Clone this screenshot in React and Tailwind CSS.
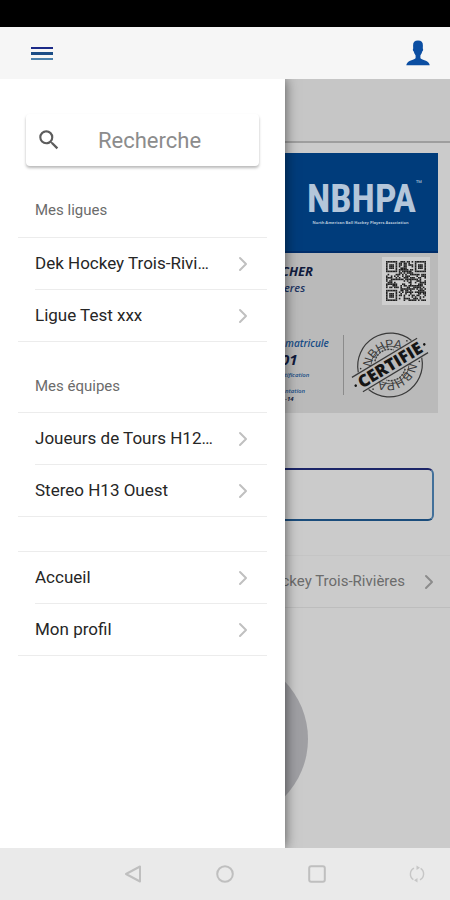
import { ChevronRight } from 'lucide-react';
import { MdSearch } from 'react-icons/md';

const leagues = ['Dek Hockey Trois-Rivi…', 'Ligue Test xxx'];
const teams = ['Joueurs de Tours H12…', 'Stereo H13 Ouest'];
const pages = ['Accueil', 'Mon profil'];

const QR_SIZE = 25;

// Corner squares first, then a fixed scatter for the data area
function isDark(x, y) {
    const corners = [[0, 0], [QR_SIZE - 7, 0], [0, QR_SIZE - 7]];
    for (const [cx, cy] of corners) {
        const dx = x - cx;
        const dy = y - cy;
        if (dx >= -1 && dx <= 7 && dy >= -1 && dy <= 7) {
            const ring = Math.max(Math.abs(dx - 3), Math.abs(dy - 3));
            return ring === 3 || ring <= 1;
        }
    }
    const n = Math.sin(x * 12.9898 + y * 78.233) * 43758.5453;
    return n - Math.floor(n) > 0.47;
}

function QrCode() {
    const cells = [];
    for (let y = 0; y < QR_SIZE; y++) {
        for (let x = 0; x < QR_SIZE; x++) {
            if (isDark(x, y)) {
                cells.push(<rect key={`${x}-${y}`} x={x} y={y} width="1" height="1" />);
            }
        }
    }

    return (
        <div className="bg-[#cecece] p-1">
            <svg viewBox="0 0 25 25" className="size-10" fill="#202020">
                {cells}
            </svg>
        </div>
    );
}

function Stamp() {
    return (
        <svg viewBox="-38 -38 76 76" className="size-[76px] overflow-visible" fill="none" stroke="#3a3a3a">
            <defs>
                <path id="stamp-arc" d="M-21 -1A22 22 0 0 1 21 -1" />
            </defs>
            <g transform="rotate(-31)">
                {[0, 180].map((angle) => (
                    <g key={angle} transform={`rotate(${angle})`}>
                        <path d="M-31 -10A33 33 0 0 1 31 -10" strokeWidth="1.2" />
                        <path d="M-16 -10A19 19 0 0 1 16 -10" strokeWidth="0.7" />
                        <path d="M-11 -11A15 15 0 0 1 11 -11" strokeWidth="1.4" strokeDasharray="2 1" />
                        <path d="M-39 -9H37" strokeWidth="1.2" />
                        <circle cx="-27" cy="-12" r="0.8" fill="#2d2d2d" stroke="none" />
                        <circle cx="27" cy="-12" r="0.8" fill="#2d2d2d" stroke="none" />
                        <text
                            className="font-['Liberation_Sans',sans-serif] text-[12px]"
                            fill="#3a3a3a"
                            stroke="none"
                            textAnchor="middle"
                        >
                            <textPath href="#stamp-arc" startOffset="50%">NBHPA</textPath>
                        </text>
                    </g>
                ))}
                <text
                    y="6"
                    className="font-['Open_Sans',sans-serif] text-[17px] font-extrabold"
                    fill="#151515"
                    stroke="none"
                    textAnchor="middle"
                >
                    CERTIFIE
                </text>
                <circle cx="-40" cy="0" r="1.3" fill="#151515" stroke="none" />
                <circle cx="40" cy="0" r="1.3" fill="#151515" stroke="none" />
            </g>
        </svg>
    );
}

function MemberCard() {
    return (
        <section className="mx-3 mt-[10px] bg-[#bababa] font-['Open_Sans',sans-serif]">
            <div className="flex h-[100px] justify-end border-b-2 border-[#002d69] bg-[#003c7b] pt-6 pr-4 text-[#b4c6da]">
                <div className="text-center">
                    <div className="flex items-start">
                        <p className="font-['Liberation_Sans_Narrow','Roboto_Condensed',sans-serif] text-[38px] leading-[44px] font-bold">
                            NBHPA
                        </p>
                        <span className="text-[8px] leading-3">™</span>
                    </div>
                    <p className="pr-2 text-[4px] leading-1 font-bold">
                        North American Ball Hockey Players Association
                    </p>
                </div>
            </div>

            <div className="flex h-[160px] justify-between">
                <div className="ml-[257px] italic">
                    <p className="ml-3 pt-2 text-[13px] leading-5 font-bold text-[#111b3d]">CHER</p>
                    <p className="ml-3 text-[11px] leading-[14px] font-semibold text-[#1d3563]">ieres</p>
                    <p className="mt-10 ml-4 text-[10px] leading-4 font-semibold text-[#164c86]">matricule</p>
                    <p className="ml-3 text-[15px] leading-4 font-bold text-[#111b3d]">01</p>
                    <p className="mt-1 ml-3 text-[6px] leading-2 font-semibold text-[#164c86]">ntification</p>
                    <p className="mt-2 ml-4 text-[6px] leading-2 font-semibold text-[#164c86]">ntation</p>
                    <p className="ml-4 text-[6px] leading-2 font-bold text-[#111b3d]">-14</p>
                </div>
                <div className="flex flex-col items-end justify-between pt-1 pb-[10px]">
                    <div className="pr-2">
                        <QrCode />
                    </div>
                    <div className="flex items-center gap-2 pr-[10px]">
                        <div className="h-[60px] w-px bg-[#8b8b8b]" />
                        <Stamp />
                    </div>
                </div>
            </div>
        </section>
    );
}

function MenuList({ items }) {
    return (
        <ul className="border-y border-[#ececec]">
            {items.map((item, index) => (
                <li key={item} className={index > 0 ? 'ml-[17px] border-t border-[#ececec]' : 'ml-[17px]'}>
                    <a href="#" className="flex h-[51px] items-center justify-between pr-3">
                        <span className="truncate text-[17px] text-[#262626]">{item}</span>
                        <ChevronRight className="size-6 shrink-0 text-[#c0c0c0]" strokeWidth={2} />
                    </a>
                </li>
            ))}
        </ul>
    );
}

function Drawer() {
    return (
        <nav className="absolute inset-y-0 left-0 w-[285px] bg-white px-[18px] pt-[35px] shadow-[0_0_12px_rgba(0,0,0,0.6)]">
            <label className="mx-2 flex h-[52px] items-center rounded-sm bg-white pl-[10px] shadow-[0_2px_3px_rgba(0,0,0,0.28)]">
                <MdSearch className="size-[26px] shrink-0 text-[#5c5c5c]" />
                <input
                    type="search"
                    aria-label="Recherche"
                    placeholder="Recherche"
                    className="ml-9 w-full min-w-0 text-[22px] outline-none placeholder:text-[#8c8c8c]"
                />
            </label>

            <h2 className="h-[71px] pt-8 text-[15px] leading-6 text-[#6b6b6b]">
                <span className="pl-[17px]">Mes ligues</span>
            </h2>
            <MenuList items={leagues} />

            <h2 className="h-[70px] pt-8 text-[15px] leading-6 text-[#6b6b6b]">
                <span className="pl-[17px]">Mes équipes</span>
            </h2>
            <MenuList items={teams} />

            <div className="mt-[34px]">
                <MenuList items={pages} />
            </div>
        </nav>
    );
}

function App() {
    return (
        <div className="flex min-h-screen flex-col bg-[#cbcbcb] font-[Roboto,sans-serif]">
            <div className="h-[27px] bg-black" />

            <header className="flex h-[52px] items-center justify-between bg-[#f6f6f6] pr-5 pl-[31px]">
                <button type="button" aria-label="Menu" className="flex w-[22px] flex-col gap-[3px]">
                    <span className="h-[2px] bg-[#1c2a88]" />
                    <span className="h-[3px] bg-[#1b4d86]" />
                    <span className="h-[2px] bg-[#4a80ab]" />
                </button>
                <button type="button" aria-label="Profil">
                    <svg viewBox="0 0 24 26" className="h-[26px] w-6" fill="#0b4ea2">
                        <path d="M12 0.5C8.6 0.5 7 2.4 7.1 5.4L7.2 8.4C6.5 9.2 7 11 7.8 11.6C8.2 13.4 8.9 14.6 9.6 15.4V18C9.4 19.6 3.4 20.4 1.6 22.4C.8 23.3.3 24.4.3 25.3H23.7C23.7 24.4 23.2 23.3 22.4 22.4C20.6 20.4 14.6 19.6 14.4 18V15.4C15.1 14.6 15.8 13.4 16.2 11.6C17 11 17.5 9.2 16.8 8.4L16.9 5.4C17 2.4 15.4 .5 12 .5Z" />
                    </svg>
                </button>
            </header>

            <div className="relative flex-1 overflow-hidden">
                <main>
                    <div className="h-16 border-b-2 border-[#9e9e9e] bg-[#c6c6c6]" />
                    <MemberCard />
                    <button
                        type="button"
                        aria-label="Carte"
                        className="mx-4 mt-[55px] block h-[53px] w-[calc(100%-32px)] rounded-md border-2 border-t-[#1c2568] border-r-[#42709a] border-b-[#1b4d7c] border-l-[#42709a]"
                    />
                    <a
                        href="#"
                        className="mt-[34px] flex h-[53px] items-center justify-end gap-3 border-y border-t-[#c5c5c5] border-b-[#bdbdbd] pr-[9px] text-[15px] text-[#6c6c6c]"
                    >
                        Dek Hockey Trois-Rivières
                        <ChevronRight className="size-6 text-[#8c8c8c]" strokeWidth={2} />
                    </a>
                    <div className="mx-auto mt-12 size-[166px] rounded-full bg-[#9f9fa3]" />
                </main>
                <Drawer />
            </div>

            <footer className="relative grid h-[52px] grid-cols-[1fr_auto_1fr] items-center bg-[#eaeaea] text-[#bfbfbf]">
                <div />
                <div className="flex gap-[74px]">
                    <button type="button" aria-label="Retour">
                        <svg viewBox="0 0 18 18" className="size-[18px]" fill="none" stroke="currentColor" strokeWidth="2" strokeLinejoin="round">
                            <path d="M16 1.5V16.5L2 9Z" />
                        </svg>
                    </button>
                    <button type="button" aria-label="Accueil Android">
                        <svg viewBox="0 0 18 18" className="size-[18px]" fill="none" stroke="currentColor" strokeWidth="2">
                            <circle cx="9" cy="9" r="7.8" />
                        </svg>
                    </button>
                    <button type="button" aria-label="Applications">
                        <svg viewBox="0 0 18 18" className="size-[18px]" fill="none" stroke="currentColor" strokeWidth="2">
                            <rect x="1.2" y="1.2" width="15.6" height="15.6" rx="2" />
                        </svg>
                    </button>
                </div>
                <button type="button" aria-label="Rotation" className="mr-6 justify-self-end">
                    <svg viewBox="0 0 18 18" className="size-[18px]" fill="none" stroke="#c6c6c6" strokeWidth="1.4">
                        <path d="M6 3.2A6.6 6.6 0 0 0 5.4 14.6" />
                        <path d="M12 14.8A6.6 6.6 0 0 0 12.6 3.4" />
                        <path d="M8.5 .5V5L12 2.8ZM9.5 17.5V13L6 15.2Z" fill="#c6c6c6" stroke="none" />
                    </svg>
                </button>
            </footer>
        </div>
    );
}

export default App;
